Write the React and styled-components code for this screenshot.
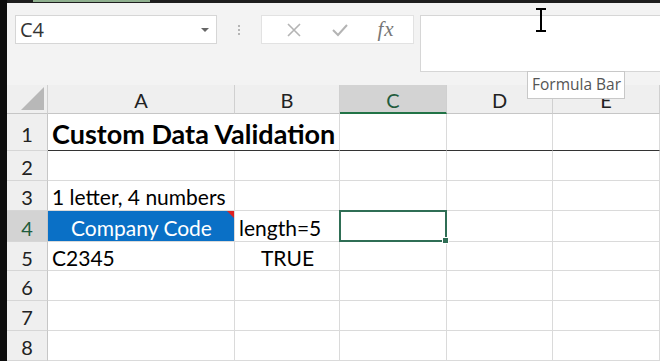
import React from 'react';
import styled, { createGlobalStyle } from 'styled-components';

const GlobalStyle = createGlobalStyle`
    html, body {
        margin: 0;
        padding: 0;
        background: #111;
        overflow: hidden;
    }
`;

const Page = styled.div`
    display: flex;
    width: 660px;
    height: 361px;
    overflow: hidden;
`;

const LeftEdge = styled.div`
    width: 7px;
    background: #0d0d0d;
`;

const Main = styled.div`
    flex: 1;
    display: flex;
    flex-direction: column;
    position: relative;
    background: #f3f3f3;
`;

const TopStrip = styled.div`
    height: 3px;
    background: #1e1e1e;

    > div {
        margin-left: 26px;
        width: 117px;
        height: 2px;
        background: #8fb08f;
    }
`;

const FormulaArea = styled.div`
    height: 82px;
    box-sizing: border-box;
    display: flex;
    align-items: flex-start;
    padding: 12px 0 0 8px;
    background: #f3f3f3;
`;

const NameBox = styled.div`
    width: 202px;
    height: 29px;
    box-sizing: border-box;
    background: #fff;
    border: 1px solid #d6d6d6;
    display: flex;
    align-items: center;
    justify-content: space-between;
    padding: 0 7px 0 4px;
    font-family: "Open Sans", sans-serif;
    font-size: 20px;
    color: #333;
`;

const DropArrow = styled.span`
    width: 0;
    height: 0;
    border-left: 4px solid transparent;
    border-right: 4px solid transparent;
    border-top: 4px solid #666;
`;

const Dots = styled.div`
    width: 44px;
    height: 29px;
    display: flex;
    flex-direction: column;
    align-items: center;
    justify-content: center;
    gap: 2px;

    > span {
        width: 2px;
        height: 2px;
        border-radius: 50%;
        background: #a0a0a0;
    }
`;

const Buttons = styled.div`
    width: 153px;
    height: 29px;
    box-sizing: border-box;
    background: #fff;
    border: 1px solid #e2e2e2;
    display: flex;
    align-items: center;
    justify-content: space-around;
    padding: 0 4px 0 10px;
`;

const Fx = styled.span`
    font-family: "Liberation Serif", serif;
    font-style: italic;
    font-size: 21px;
    color: #777;
    letter-spacing: 1px;
`;

const FormulaInput = styled.div`
    flex: 1;
    margin-left: 6px;
    height: 55px;
    background: #fff;
    border: 1px solid #d6d6d6;
    border-right: none;
`;

const Cursor = styled.svg`
    position: absolute;
    left: 527px;
    top: 8px;
`;

const Tooltip = styled.div`
    position: absolute;
    left: 520px;
    top: 71px;
    padding: 3px 3px 4px 4px;
    background: #fff;
    border: 1px solid #c8c8c8;
    font-family: "Open Sans", sans-serif;
    font-size: 15.5px;
    line-height: 19px;
    color: #555;
    z-index: 3;
`;

const Grid = styled.div`
    display: grid;
    grid-template-columns: 41px 187px 105px 107px 106px 107px;
    grid-template-rows: 29px 37px 30px 30px 31px 29px 30px 30px 30px;
    background: #fff;
    font-family: Lato, "Open Sans", sans-serif;
`;

const Corner = styled.div`
    background: #efefef;
    border-right: 1px solid #d0d0d0;
    border-bottom: 1px solid #c6c6c6;
    box-sizing: border-box;
    display: flex;
    align-items: flex-end;
    justify-content: flex-end;
    padding: 0 3px 3px 0;

    > div {
        width: 0;
        height: 0;
        border-left: 23px solid transparent;
        border-bottom: 23px solid #b8b8b8;
    }
`;

const ColHead = styled.div`
    background: ${({ active }) => (active ? '#d3d3d3' : '#efefef')};
    border-right: 1px solid #d0d0d0;
    border-bottom: ${({ active }) => (active ? '2px solid #217346' : '1px solid #c6c6c6')};
    box-sizing: border-box;
    display: flex;
    align-items: center;
    justify-content: center;
    font-size: 20px;
    padding-top: 2px;
    color: ${({ active }) => (active ? '#1f5c3d' : '#222')};
`;

const RowHead = styled.div`
    background: ${({ active }) => (active ? '#d3d3d3' : '#efefef')};
    border-right: 1px solid #c6c6c6;
    border-bottom: 1px solid #d6d6d6;
    box-sizing: border-box;
    display: flex;
    align-items: center;
    justify-content: center;
    font-size: 20px;
    padding-top: 3px;
    color: ${({ active }) => (active ? '#1f5c3d' : '#222')};
`;

const Cell = styled.div`
    position: relative;
    grid-column: ${({ span }) => (span ? `span ${span}` : 'auto')};
    box-sizing: border-box;
    border-right: 1px solid #dadada;
    border-bottom: ${({ heavy }) => (heavy ? '1px solid #333' : '1px solid #dadada')};
    background: ${({ fill }) => fill || '#fff'};
    color: ${({ fill }) => (fill ? '#fff' : '#000')};
    display: flex;
    align-items: center;
    justify-content: ${({ align }) => align || 'flex-start'};
    padding: 2px 3px 0 4px;
    white-space: nowrap;
    font-size: ${({ big }) => (big ? '27px' : '21px')};
    font-weight: ${({ big }) => (big ? 700 : 400)};
`;

const Note = styled.span`
    position: absolute;
    top: 0;
    right: 0;
    width: 0;
    height: 0;
    border-left: 7px solid transparent;
    border-top: 7px solid #e02020;
`;

const Selection = styled.span`
    position: absolute;
    left: -1px;
    top: -1px;
    right: -1px;
    bottom: -1px;
    border: 2px solid #2f6e55;
    z-index: 2;

    &::after {
        content: '';
        position: absolute;
        right: -4px;
        bottom: -4px;
        width: 5px;
        height: 5px;
        background: #2f6e55;
        border: 1px solid #fff;
    }
`;

const cols = ['A', 'B', 'C', 'D', 'E'];

const rows = [
    { n: 1, heavy: true, cells: [{ text: 'Custom Data Validation', big: true, span: 2 }, {}, {}, {}] },
    { n: 2, cells: [{}, {}, {}, {}, {}] },
    { n: 3, cells: [{ text: '1 letter, 4 numbers' }, {}, {}, {}, {}] },
    {
        n: 4,
        active: true,
        cells: [
            { text: 'Company Code', fill: '#0a70c6', align: 'center', note: true },
            { text: 'length=5' },
            { selected: true },
            {},
            {},
        ],
    },
    { n: 5, cells: [{ text: 'C2345' }, { text: 'TRUE', align: 'center' }, {}, {}, {}] },
    { n: 6, cells: [{}, {}, {}, {}, {}] },
    { n: 7, cells: [{}, {}, {}, {}, {}] },
    { n: 8, cells: [{}, {}, {}, {}, {}] },
];

export default function App() {
    return (
        <>
            <GlobalStyle />
            <Page>
                <LeftEdge />
                <Main>
                    <TopStrip>
                        <div />
                    </TopStrip>
                    <FormulaArea>
                        <NameBox>
                            C4
                            <DropArrow />
                        </NameBox>
                        <Dots>
                            <span />
                            <span />
                            <span />
                        </Dots>
                        <Buttons>
                            <svg width="16" height="16" viewBox="0 0 16 16">
                                <path d="M2 2 L14 14 M14 2 L2 14" stroke="#b4b4b4" strokeWidth="1.6" fill="none" />
                            </svg>
                            <svg width="18" height="16" viewBox="0 0 18 16">
                                <path d="M2 8 L7 13 L16 3" stroke="#b4b4b4" strokeWidth="2" fill="none" />
                            </svg>
                            <Fx>fx</Fx>
                        </Buttons>
                        <FormulaInput />
                    </FormulaArea>
                    <Cursor width="14" height="24" viewBox="0 0 14 24">
                        <path d="M2 1 H12 M7 1 V23 M2 23 H12" stroke="#000" strokeWidth="2" fill="none" />
                    </Cursor>
                    <Tooltip>Formula Bar</Tooltip>
                    <Grid>
                        <Corner>
                            <div />
                        </Corner>
                        {cols.map((c) => (
                            <ColHead key={c} active={c === 'C'}>
                                {c}
                            </ColHead>
                        ))}
                        {rows.map((r) => (
                            <React.Fragment key={r.n}>
                                <RowHead active={r.active}>{r.n}</RowHead>
                                {r.cells.map((cell, i) => (
                                    <Cell
                                        key={i}
                                        heavy={r.heavy}
                                        span={cell.span}
                                        big={cell.big}
                                        fill={cell.fill}
                                        align={cell.align}
                                    >
                                        {cell.text}
                                        {cell.note && <Note />}
                                        {cell.selected && <Selection />}
                                    </Cell>
                                ))}
                            </React.Fragment>
                        ))}
                    </Grid>
                </Main>
            </Page>
        </>
    );
}
